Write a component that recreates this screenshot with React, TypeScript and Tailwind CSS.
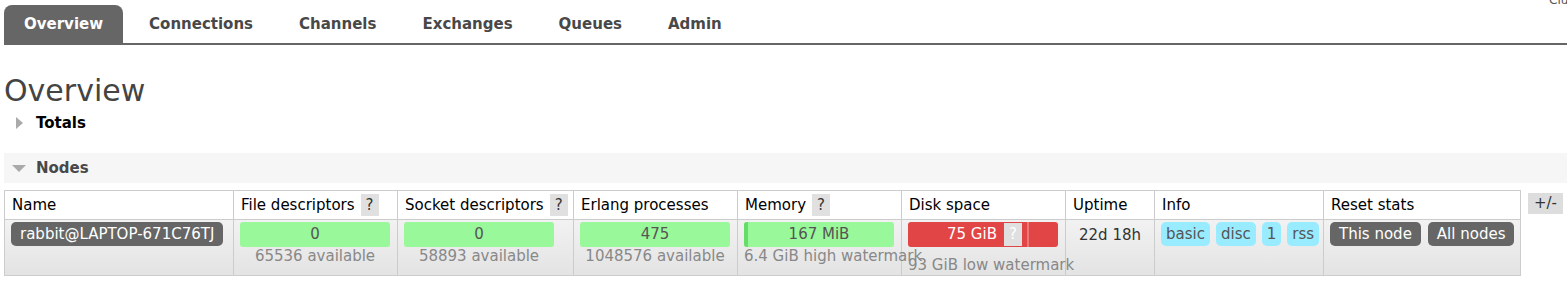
import React from 'react';

const TABS = ['Overview', 'Connections', 'Channels', 'Exchanges', 'Queues', 'Admin'];

function Help() {
  return (
    <span className="inline-block bg-[#e0e0e0] text-[#333] px-[5px] leading-[22px] ml-[6px] align-middle">?</span>
  );
}

function Bar({ value, sub, used }: { value: string; sub?: string; used?: boolean }) {
  return (
    <div className="w-[150px]">
      <div className="relative h-[25px] rounded-[3px] flex items-center justify-center bg-[#99f899] text-[#555]">
        {used && <span className="absolute left-0 top-0 bottom-0 w-[4px] rounded-l-[3px] bg-[#66dd66]" />}
        {value}
      </div>
      {sub && <div className="text-center text-[#888] leading-[18px] whitespace-nowrap">{sub}</div>}
    </div>
  );
}

export default function App() {
  return (
    <div className="relative w-full h-[285px] overflow-hidden bg-white text-[15px] text-black" style={{ fontFamily: '"DejaVu Sans", Verdana, sans-serif' }}>
      <span className="absolute left-[1549px] top-[-9px] text-[12px] text-[#555] whitespace-nowrap">Cluster rabbit@LAPTOP</span>

      {/* Tabs */}
      <ul className="flex items-end pt-[5px] ml-[4px] border-b-2 border-[#666]">
        {TABS.map((tab, i) => (
          <li
            key={tab}
            className={
              'h-[38px] flex items-center px-5 text-[15px] font-bold rounded-t-[8px] ' +
              (i === 0 ? 'bg-[#666] text-white' : 'text-[#484848] ml-[6px]')
            }
          >
            {tab}
          </li>
        ))}
      </ul>

      <h1 className="text-[30px] text-[#444] leading-none ml-[4px] mt-[31px]">Overview</h1>

      {/* Totals */}
      <div className="flex items-center mt-[9px] ml-[16px] h-[16px]">
        <span className="w-0 h-0 border-y-[6px] border-y-transparent border-l-[7px] border-l-[#aaa]" />
        <span className="ml-[13px] text-[15px] font-bold">Totals</span>
      </div>

      {/* Nodes */}
      <div className="flex items-center ml-[4px] mt-[22px] h-[30px] bg-[#f6f6f6]">
        <span className="ml-[8px] w-0 h-0 border-x-[7px] border-x-transparent border-t-[7px] border-t-[#aaa]" />
        <span className="ml-[10px] text-[15px] font-bold text-[#484848]">Nodes</span>
      </div>

      <div className="flex items-start ml-[4px] mt-[7px]">
        <table className="border-collapse border border-[#ccc] table-fixed w-[1516px]">
          <colgroup>
            <col className="w-[229px]" />
            <col className="w-[164px]" />
            <col className="w-[176px]" />
            <col className="w-[164px]" />
            <col className="w-[164px]" />
            <col className="w-[164px]" />
            <col className="w-[89px]" />
            <col className="w-[169px]" />
            <col className="w-[197px]" />
          </colgroup>
          <thead>
            <tr className="h-[29px] bg-white text-left">
              <th className="font-normal border border-[#ccc] px-[7px]">Name</th>
              <th className="font-normal border border-[#ccc] px-[7px] whitespace-nowrap">File descriptors<Help /></th>
              <th className="font-normal border border-[#ccc] px-[7px] whitespace-nowrap">Socket descriptors<Help /></th>
              <th className="font-normal border border-[#ccc] px-[7px] whitespace-nowrap">Erlang processes</th>
              <th className="font-normal border border-[#ccc] px-[7px] whitespace-nowrap">Memory<Help /></th>
              <th className="font-normal border border-[#ccc] px-[7px]">Disk space</th>
              <th className="font-normal border border-[#ccc] px-[7px]">Uptime</th>
              <th className="font-normal border border-[#ccc] px-[7px]">Info</th>
              <th className="font-normal border border-[#ccc] px-[7px]">Reset stats</th>
            </tr>
          </thead>
          <tbody>
            <tr className="h-[56px] align-top bg-gradient-to-b from-[#f2f2f2] to-[#e3e3e3]">
              <td className="border border-[#ccc] px-[6px] pt-[2px]">
                <span className="inline-block bg-[#666] text-white rounded-[5px] px-[9px] leading-[24px] whitespace-nowrap">rabbit@LAPTOP-671C76TJ</span>
              </td>
              <td className="border border-[#ccc] px-[6px] pt-[2px]">
                <Bar value="0" sub="65536 available" />
              </td>
              <td className="border border-[#ccc] px-[6px] pt-[2px]">
                <Bar value="0" sub="58893 available" />
              </td>
              <td className="border border-[#ccc] px-[6px] pt-[2px]">
                <Bar value="475" sub="1048576 available" />
              </td>
              <td className="border border-[#ccc] px-[6px] pt-[2px] overflow-visible">
                <Bar value="167 MiB" used />
                <div className="text-[#888] leading-[18px] whitespace-nowrap">6.4 GiB high watermark</div>
              </td>
              <td className="border border-[#ccc] px-[6px] pt-[2px]">
                <div className="relative w-[150px] h-[25px] rounded-[3px] bg-[#e24545] text-white flex items-center pl-[39px]">
                  75 GiB
                  <span className="ml-[7px] bg-[#e0e0e0] text-white px-[5px] leading-[23px]">?</span>
                  <span className="absolute left-[119px] top-0 bottom-0 w-[2px] bg-[#ee7777]" />
                </div>
                <div className="text-[#888] leading-[18px] whitespace-nowrap mt-[9px]">93 GiB low watermark</div>
              </td>
              <td className="border border-[#ccc] px-[6px] pt-[4px] text-center text-[#333] whitespace-nowrap">22d 18h</td>
              <td className="border border-[#ccc] px-[6px] pt-[2px]">
                <div className="flex gap-[6px]">
                  {['basic', 'disc', '1', 'rss'].map((b) => (
                    <span key={b} className="bg-[#99ebff] text-[#555] rounded-[5px] px-[5px] leading-[24px]">{b}</span>
                  ))}
                </div>
              </td>
              <td className="border border-[#ccc] px-[6px] pt-[2px]">
                <div className="flex gap-[7px]">
                  <span className="bg-[#666] text-white rounded-[5px] px-[9px] leading-[24px] whitespace-nowrap">This node</span>
                  <span className="bg-[#666] text-white rounded-[5px] px-[9px] leading-[24px] whitespace-nowrap">All nodes</span>
                </div>
              </td>
            </tr>
          </tbody>
        </table>
        <span className="ml-[7px] mt-[3px] bg-[#ddd] text-[#333] px-[6px] leading-[21px]">+/-</span>
      </div>
    </div>
  );
}
